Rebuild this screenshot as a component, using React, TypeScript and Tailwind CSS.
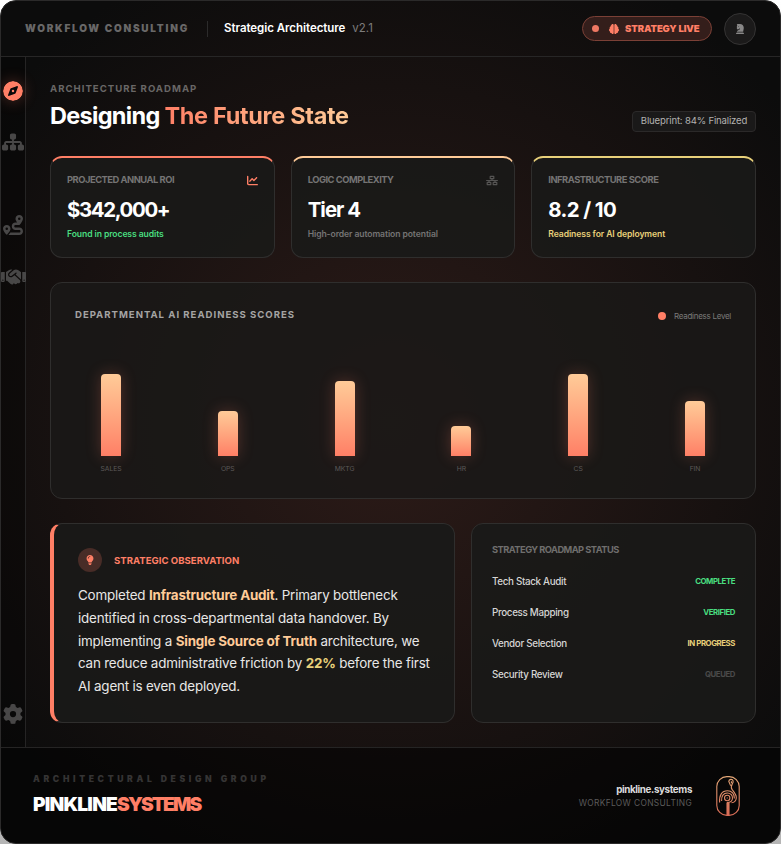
import React from "react";
import {
  FaBrain,
  FaChartLine,
  FaChessKnight,
  FaCompass,
  FaGear,
  FaHandshake,
  FaLightbulb,
  FaNetworkWired,
  FaRoute,
  FaSitemap,
} from "react-icons/fa6";

const departments = [
  { name: "SALES", height: 82 },
  { name: "OPS", height: 45 },
  { name: "MKTG", height: 75 },
  { name: "HR", height: 30 },
  { name: "CS", height: 82 },
  { name: "FIN", height: 55 },
];

const roadmap = [
  { name: "Tech Stack Audit", status: "COMPLETE", color: "text-[#4ade80]" },
  { name: "Process Mapping", status: "VERIFIED", color: "text-[#4ade80]" },
  { name: "Vendor Selection", status: "IN PROGRESS", color: "text-[#e8d07a]" },
  { name: "Security Review", status: "QUEUED", color: "text-[#4a4a4a]" },
];

const Header = () => (
  <header className="flex h-14 shrink-0 items-center justify-between border-b border-[#272626] px-6">
    <div className="flex items-center">
      <span className="w-[182px] whitespace-nowrap text-[10px] font-black tracking-[1.77px] text-[#696868]">
        WORKFLOW CONSULTING
      </span>
      <span className="h-4 w-px bg-[#2c2b2b]" />
      <span className="ml-4 mt-px whitespace-nowrap text-[11.5px] font-semibold tracking-[-0.04px] text-white">
        Strategic Architecture
      </span>
      <span className="ml-[7px] mt-px text-[11.5px] text-[#7d7c7c]">v2.1</span>
    </div>
    <div className="flex items-center gap-3">
      <div className="flex h-[25px] w-[130px] items-center rounded-full border border-[#7b4036] bg-[#341e1b] pl-[9px] text-[#ff7f66]">
        <span className="size-[7px] rounded-full bg-[#ef7863]" />
        <FaBrain className="ml-[10px] size-[10px]" />
        <span className="ml-[6px] mt-px whitespace-nowrap text-[9.5px] font-black tracking-[-0.1px]">
          STRATEGY LIVE
        </span>
      </div>
      <div className="flex size-8 items-center justify-center rounded-full border border-[#343333] bg-[#1b1a1a]">
        <FaChessKnight className="mt-px size-[10px] text-[#888787]" />
      </div>
    </div>
  </header>
);

const Sidebar = () => (
  <nav className="flex w-[25px] shrink-0 flex-col items-center border-r border-[#252424] bg-black/30 text-[#484747]">
    <FaCompass className="mt-6 size-5 shrink-0 rounded-full text-[#ff7f66] shadow-[0_0_15px_rgba(255,127,102,0.3)]" />
    <FaSitemap className="mt-[31px] h-5 w-[22px] shrink-0" />
    <FaRoute className="mt-[63px] size-5 shrink-0" />
    <FaHandshake className="mt-8 h-5 w-[25px] shrink-0" />
    <FaGear className="mb-[23px] mt-auto size-5 shrink-0" />
  </nav>
);

interface StatCardProps {
  label: string;
  value: string;
  note: string;
  accent: string;
  valueTracking: string;
  noteColor: string;
  icon?: React.ReactNode;
}

const StatCard = ({ label, value, note, accent, valueTracking, noteColor, icon }: StatCardProps) => (
  <div
    className={`flex h-[102px] flex-1 flex-col rounded-xl border border-[#2f2e2d] border-t-2 bg-[#1a1918]/90 px-4 pt-[15px] ${accent}`}
  >
    <div className="flex h-[14px] items-center justify-between">
      <span className="whitespace-nowrap text-[9.4px] font-bold tracking-[-0.5px] text-[#757474]">
        {label}
      </span>
      {icon}
    </div>
    <span className={`mt-[9px] whitespace-nowrap text-[20.4px] font-bold leading-7 text-white ${valueTracking}`}>
      {value}
    </span>
    <span className={`mt-[3px] whitespace-nowrap text-[8.6px] font-semibold leading-[14px] tracking-[-0.09px] ${noteColor}`}>
      {note}
    </span>
  </div>
);

const ReadinessChart = () => (
  <section className="mt-6 h-[217px] rounded-xl border border-[#2f2e2d] bg-[#1a1918]/85 px-6 pt-6">
    <div className="flex h-4 items-center justify-between">
      <h2 className="whitespace-nowrap text-[9.6px] font-bold tracking-[0.98px] text-[#a5a4a3]">
        DEPARTMENTAL AI READINESS SCORES
      </h2>
      <div className="flex items-center gap-2 pt-px">
        <span className="size-2 rounded-full bg-[#ff7f66]" />
        <span className="whitespace-nowrap text-[8px] tracking-[-0.28px] text-[#7b7a79]">Readiness Level</span>
      </div>
    </div>
    <div className="mt-[34px] flex h-[99px] items-end justify-between">
      {departments.map((d) => (
        <div key={d.name} className="flex w-[72px] flex-col items-center">
          <div
            className="w-5 rounded-t bg-linear-to-t from-[#ff7f66] to-[#ffcb98] shadow-[0_0_15px_rgba(255,127,102,0.25)]"
            style={{ height: d.height }}
          />
        </div>
      ))}
    </div>
    <div className="mt-2 flex justify-between">
      {departments.map((d) => (
        <span key={d.name} className="w-[72px] text-center text-[6.8px] leading-[9px] tracking-[-0.1px] text-[#5c5958]">
          {d.name}
        </span>
      ))}
    </div>
  </section>
);

const Observation = () => (
  <section className="h-[200px] w-[405px] rounded-xl border border-l-4 border-[#2f2e2d] border-l-[#ff7f66] bg-[#1a1918]/90 px-6 pt-6">
    <div className="flex items-center gap-3">
      <div className="flex size-6 items-center justify-center rounded-full bg-[#482c27]">
        <FaLightbulb className="size-[10px] text-[#ff7f66]" />
      </div>
      <span className="mt-0.5 whitespace-nowrap text-[9.6px] font-bold text-[#ff7f66]">
        STRATEGIC OBSERVATION
      </span>
    </div>
    <p className="mt-3 whitespace-nowrap text-[13.4px] leading-[22.75px] tracking-[-0.19px] text-[#e8e7e6]">
      Completed <b className="font-bold text-[#ffcb98]">Infrastructure Audit</b>. Primary bottleneck
      <br />
      identified in cross-departmental data handover. By
      <br />
      implementing a <b className="font-bold text-[#ffcb98]">Single Source of Truth</b> architecture, we
      <br />
      can reduce administrative friction by <b className="font-bold text-[#e8d07a]">22%</b> before the first
      <br />
      AI agent is even deployed.
    </p>
  </section>
);

const RoadmapStatus = () => (
  <section className="h-[200px] flex-1 rounded-xl border border-[#2f2e2d] bg-[#1a1918]/90 px-5 pt-[19px]">
    <h2 className="whitespace-nowrap text-[9.3px] font-bold leading-[14px] tracking-[-0.54px] text-[#6f6e6d]">
      STRATEGY ROADMAP STATUS
    </h2>
    <ul className="mt-[18px] flex flex-col gap-4">
      {roadmap.map((item) => (
        <li key={item.name} className="flex h-[15px] items-center justify-between">
          <span className="whitespace-nowrap text-[9.8px] font-medium tracking-[-0.32px] text-[#d6d5d4]">
            {item.name}
          </span>
          <span className={`-mt-px whitespace-nowrap text-[7.8px] font-bold tracking-[-0.42px] ${item.color}`}>
            {item.status}
          </span>
        </li>
      ))}
    </ul>
  </section>
);

const FlamingoLogo = () => (
  <svg width="24" height="40" viewBox="0 0 24 40" fill="none" stroke="url(#flamingo)" strokeWidth="1.1">
    <defs>
      <linearGradient id="flamingo" x1="0" y1="0" x2="0" y2="40" gradientUnits="userSpaceOnUse">
        <stop stopColor="#e3a878" />
        <stop offset="1" stopColor="#d96a55" />
      </linearGradient>
    </defs>
    <rect x="0.8" y="0.6" width="22.4" height="38.8" rx="10" />
    <path d="M14.6 9.6 12.8 5.4C13 3 16.4 2.6 17.1 4.8C17.8 8 13.4 9.6 16 13.4C18 16 20.6 18.5 20.3 22C20 25 18 26.6 15.5 26.8" />
    <path d="M15.4 7.2V5.2" />
    <path d="M3.6 26.5C3 19 6 14.8 11.5 14.8C15.8 14.8 18.6 18 18.4 22.4" />
    <path d="M5.6 25C5.2 20 7.5 17 11.3 17C14.5 17 16.5 19.2 16.5 22C16.5 24.8 14.2 26.6 11 26.6" />
    <circle cx="11.2" cy="22" r="2.7" />
    <path d="M11.2 21.4V22.6M11 26.6V39M12 26.6V39M13 26.8V39" />
  </svg>
);

const Footer = () => (
  <footer className="flex h-24 shrink-0 items-center justify-between border-t border-[#252424] bg-black/50 px-8">
    <div className="flex flex-col">
      <span className="whitespace-nowrap text-[8.6px] font-black leading-3 tracking-[3.64px] text-[#353434]">
        ARCHITECTURAL DESIGN GROUP
      </span>
      <span className="mt-[5px] whitespace-nowrap text-[19.2px] font-black leading-7 tracking-[-0.8px] text-white">
        PINKLINE<span className="tracking-[-1.9px] text-[#ff7f66]">SYSTEMS</span>
      </span>
    </div>
    <div className="flex items-center gap-6 pr-2">
      <div className="flex flex-col items-end pt-[2px]">
        <span className="whitespace-nowrap text-[9.8px] font-bold leading-[14px] tracking-[-0.37px] text-[#dcdbdb]">
          pinkline.systems
        </span>
        <span className="whitespace-nowrap text-[8.4px] leading-[13px] tracking-[0.35px] text-[#5c5b5b]">
          WORKFLOW CONSULTING
        </span>
      </div>
      <FlamingoLogo />
    </div>
  </footer>
);

const App = () => {
  return (
    <div className="h-[844px] w-[781px] bg-linear-to-b from-white to-[#b5b5b5] font-['Inter','Liberation_Sans',sans-serif]">
      <div className="flex h-[844px] flex-col overflow-hidden rounded-2xl border border-[#2b2a2a] bg-[#0c0c0c] bg-[radial-gradient(circle_at_center,#2d1b18_0%,#0c0c0c_88%)]">
        <Header />
        <div className="flex min-h-0 flex-1">
          <Sidebar />
          <main className="flex-1 px-6 pt-6">
            <div className="flex h-[75px] items-end justify-between">
              <div className="flex h-full flex-col">
                <span className="whitespace-nowrap text-[9.6px] font-bold leading-4 tracking-[1px] text-[#696766]">
                  ARCHITECTURE ROADMAP
                </span>
                <h1 className="mt-[3px] whitespace-nowrap text-[23.5px] font-bold leading-8 tracking-[-0.7px] text-white">
                  Designing{" "}
                  <span className="bg-linear-to-r from-[#ff7f66] to-[#ffcb98] bg-clip-text tracking-[-0.32px] text-transparent">
                    The Future State
                  </span>
                </h1>
              </div>
              <div className="mb-6 flex h-[21px] w-[124px] items-center justify-center whitespace-nowrap rounded border border-[#2b2929] bg-[#1a1919] text-[9.6px] tracking-[-0.18px] text-[#b2b1b0]">
                Blueprint: 84% Finalized
              </div>
            </div>
            <div className="flex gap-4">
              <StatCard
                label="PROJECTED ANNUAL ROI"
                value="$342,000+"
                note="Found in process audits"
                accent="border-t-[#ff7f66]"
                valueTracking="tracking-[-1.35px]"
                noteColor="text-[#4ade80]"
                icon={<FaChartLine className="size-[11px] text-[#ff7f66]" />}
              />
              <StatCard
                label="LOGIC COMPLEXITY"
                value="Tier 4"
                note="High-order automation potential"
                accent="border-t-[#ffcb98]"
                valueTracking="tracking-[-0.95px]"
                noteColor="text-[#757474]"
                icon={<FaNetworkWired className="h-[11px] w-3 text-[#555453]" />}
              />
              <StatCard
                label="INFRASTRUCTURE SCORE"
                value="8.2 / 10"
                note="Readiness for AI deployment"
                accent="border-t-[#e8d07a]"
                valueTracking="tracking-[-0.6px]"
                noteColor="text-[#e8d07a]"
              />
            </div>
            <ReadinessChart />
            <div className="mt-6 flex gap-4">
              <Observation />
              <RoadmapStatus />
            </div>
          </main>
        </div>
        <Footer />
      </div>
    </div>
  );
};

export default App;
